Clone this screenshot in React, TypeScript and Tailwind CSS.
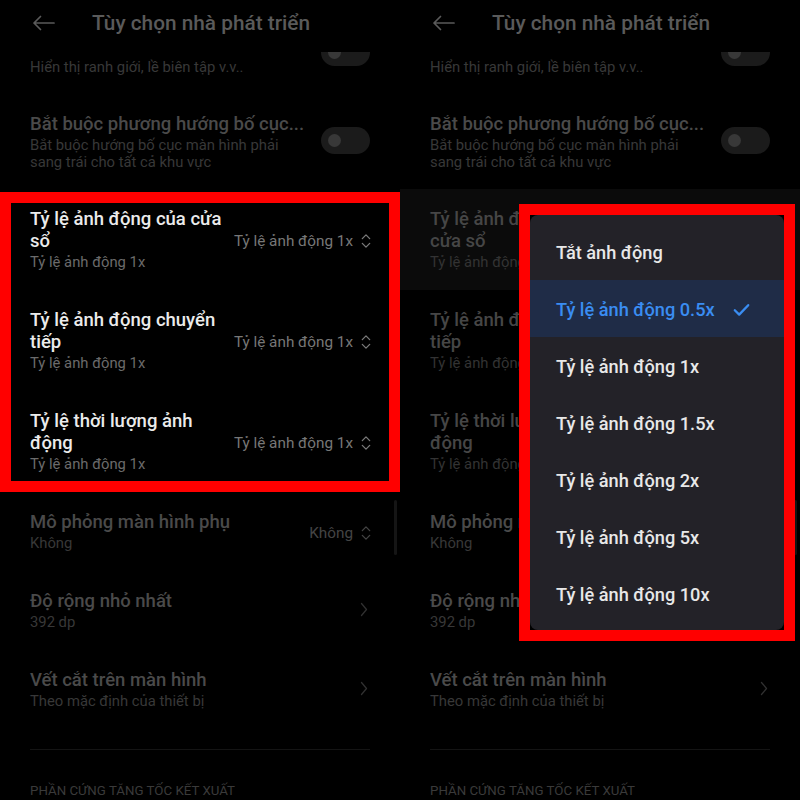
import React from "react";

function BackArrow() {
  return (
    <svg width="24" height="16" viewBox="0 0 24 16" fill="none">
      <path d="M2 8 H22 M8.5 1.5 L2 8 L8.5 14.5" stroke="#5a5a5a" strokeWidth="1.7" strokeLinecap="round" strokeLinejoin="round" />
    </svg>
  );
}

function UpDown({ color }: { color: string }) {
  return (
    <svg width="10" height="16" viewBox="0 0 10 16" fill="none">
      <path d="M1.3 5.6 L5 1.9 L8.7 5.6 M1.3 10.4 L5 14.1 L8.7 10.4" stroke={color} strokeWidth="1.3" strokeLinecap="round" strokeLinejoin="round" />
    </svg>
  );
}

function ChevronRight() {
  return (
    <svg width="8" height="15" viewBox="0 0 8 15" fill="none">
      <path d="M1.5 1.5 L6.5 7.5 L1.5 13.5" stroke="#303030" strokeWidth="1.3" strokeLinecap="round" strokeLinejoin="round" />
    </svg>
  );
}

function Check() {
  return (
    <svg width="17" height="14" viewBox="0 0 17 14" fill="none">
      <path d="M1.8 7.3 L6.2 11.6 L15.2 2.2" stroke="#3a8df2" strokeWidth="2.3" strokeLinecap="round" strokeLinejoin="round" />
    </svg>
  );
}

function Toggle({ className }: { className: string }) {
  return (
    <div className={`w-[49px] h-[27px] rounded-full bg-[#1b1b1b] flex items-center pl-[7px] shrink-0 ${className}`}>
      <div className="w-[13px] h-[13px] rounded-full bg-[#383838]" />
    </div>
  );
}

function Header() {
  return (
    <div className="h-[52px] shrink-0 bg-black flex items-start pt-[11px] pl-[32px]">
      <div className="mt-[4px]">
        <BackArrow />
      </div>
      <div className="ml-[36px] text-[20.8px] leading-[24px] font-medium text-[#5a5a5a] whitespace-nowrap">
        Tùy chọn nhà phát triển
      </div>
    </div>
  );
}

type RowProps = {
  lines: string[];
  sub: string[];
  titleCls: string;
  subCls: string;
  subLh: string;
  right?: React.ReactNode;
  bg?: string;
};

function Row({ lines, sub, titleCls, subCls, subLh, right, bg = "" }: RowProps) {
  return (
    <div className={`flex items-center justify-between pl-[30px] pr-[29px] pt-[19px] pb-[17px] ${bg}`}>
      <div className="flex flex-col">
        <div className={`text-[18.5px] leading-[22px] font-medium whitespace-nowrap ${titleCls}`}>
          {lines.map((l, i) => (
            <div key={i}>{l}</div>
          ))}
        </div>
        <div className={`text-[14.8px] whitespace-nowrap ${subLh} ${subCls}`}>
          {sub.map((l, i) => (
            <div key={i}>{l}</div>
          ))}
        </div>
      </div>
      {right}
    </div>
  );
}

function Value({ text, cls, icon }: { text: string; cls: string; icon: string }) {
  return (
    <div className="flex items-center gap-[8px] shrink-0">
      <span className={`text-[15.3px] leading-[20px] ${cls}`}>{text}</span>
      <UpDown color={icon} />
    </div>
  );
}

const OPTIONS = [
  "Tắt ảnh động",
  "Tỷ lệ ảnh động 0.5x",
  "Tỷ lệ ảnh động 1x",
  "Tỷ lệ ảnh động 1.5x",
  "Tỷ lệ ảnh động 2x",
  "Tỷ lệ ảnh động 5x",
  "Tỷ lệ ảnh động 10x",
];

function Dropdown() {
  return (
    <div className="absolute left-[119px] top-[204px] w-[276px] border-[11px] border-[#ff0000] bg-black">
      <div className="bg-[#232228] rounded-[8px] py-[8px]">
        {OPTIONS.map((o, i) => (
          <div
            key={o}
            className={
              i === 1
                ? "h-[57px] flex items-center justify-between pl-[26px] pr-[34px] pt-[3px] bg-[#1f2c47]"
                : "h-[57px] flex items-center justify-between pl-[26px] pr-[34px] pt-[3px]"
            }
          >
            <span
              className={
                i === 1
                  ? "text-[18.2px] font-medium text-[#3a8df2] whitespace-nowrap"
                  : "text-[18.2px] font-medium text-[#e8e8e8] whitespace-nowrap"
              }
            >
              {o}
            </span>
            {i === 1 && <Check />}
          </div>
        ))}
      </div>
    </div>
  );
}

function Panel({ right }: { right: boolean }) {
  const hiTitle = right ? "text-[#464646]" : "text-[#ebebeb]";
  const hiSub = right ? "text-[#333333]" : "text-[#6b6b6b]";
  const hiVal = right ? "text-[#3c3c3c]" : "text-[#777777]";
  const hiIcon = right ? "#3c3c3c" : "#7a7a7a";
  const dimTitle = "text-[#4a4a4a]";
  const dimSub = "text-[#383838]";

  return (
    <div className="relative w-[400px] h-[800px] bg-black flex flex-col overflow-hidden">
      <Header />
      <div className="flex-1 overflow-hidden">
        <div className="-mt-[34px] flex flex-col">
          <div className="flex items-center justify-between pl-[30px] pr-[30px] pt-[13px] pb-[19px]">
            <div className="flex flex-col">
              <div className={`text-[18.5px] leading-[22px] font-medium whitespace-nowrap ${dimTitle}`}>
                Hiển thị giới hạn bố cục
              </div>
              <div className={`text-[14.8px] leading-[18px] mt-[5px] whitespace-nowrap ${dimSub}`}>
                Hiển thị ranh giới, lề biên tập v.v..
              </div>
            </div>
            <Toggle className="mb-[2px]" />
          </div>

          <div className="flex items-center justify-between pl-[30px] pr-[30px] py-[18px]">
            <div className="flex flex-col">
              <div className={`text-[18.5px] leading-[22px] font-medium whitespace-nowrap ${dimTitle}`}>
                Bắt buộc phương hướng bố cục...
              </div>
              <div className={`text-[14.8px] leading-[17px] mt-[2px] whitespace-nowrap ${dimSub}`}>
                <div>Bắt buộc hướng bố cục màn hình phải</div>
                <div>sang trái cho tất cả khu vực</div>
              </div>
            </div>
            <Toggle className="mb-[3px]" />
          </div>

          <div className="relative">
            <Row
              lines={right ? ["Tỷ lệ ảnh động của", "cửa sổ"] : ["Tỷ lệ ảnh động của cửa", "sổ"]}
              sub={["Tỷ lệ ảnh động 1x"]}
              titleCls={hiTitle}
              subCls={hiSub}
              subLh="leading-[21px]"
              bg={right ? "bg-[#0b0b0b]" : ""}
              right={<Value text={right ? "Tỷ lệ ảnh động 0.5x" : "Tỷ lệ ảnh động 1x"} cls={hiVal} icon={hiIcon} />}
            />
            <Row
              lines={["Tỷ lệ ảnh động chuyển", "tiếp"]}
              sub={["Tỷ lệ ảnh động 1x"]}
              titleCls={hiTitle}
              subCls={hiSub}
              subLh="leading-[21px]"
              right={<Value text="Tỷ lệ ảnh động 1x" cls={hiVal} icon={hiIcon} />}
            />
            <Row
              lines={["Tỷ lệ thời lượng ảnh", "động"]}
              sub={["Tỷ lệ ảnh động 1x"]}
              titleCls={hiTitle}
              subCls={hiSub}
              subLh="leading-[21px]"
              right={<Value text="Tỷ lệ ảnh động 1x" cls={hiVal} icon={hiIcon} />}
            />
            {!right && (
              <div className="absolute left-0 right-0 top-[3px] bottom-0 border-[11px] border-[#ff0000] pointer-events-none" />
            )}
          </div>

          <Row
            lines={["Mô phỏng màn hình phụ"]}
            sub={["Không"]}
            titleCls={dimTitle}
            subCls={dimSub}
            subLh="leading-[21px]"
            right={<Value text="Không" cls="text-[#444444]" icon="#444444" />}
          />
          <Row
            lines={["Độ rộng nhỏ nhất"]}
            sub={["392 dp"]}
            titleCls={dimTitle}
            subCls={dimSub}
            subLh="leading-[21px]"
            right={
              <div className="mb-[4px] mr-[3px]">
                <ChevronRight />
              </div>
            }
          />
          <Row
            lines={["Vết cắt trên màn hình"]}
            sub={["Theo mặc định của thiết bị"]}
            titleCls={dimTitle}
            subCls={dimSub}
            subLh="leading-[21px]"
            right={
              <div className="mb-[4px] mr-[3px]">
                <ChevronRight />
              </div>
            }
          />
          <div className="mx-[30px] mt-[20px] h-px bg-[#141414]" />
          <div className="pl-[30px] mt-[33px] text-[13.3px] leading-[16px] text-[#3a3a3a] whitespace-nowrap">
            PHẦN CỨNG TĂNG TỐC KẾT XUẤT
          </div>
        </div>
      </div>
      <div className="absolute right-[3px] top-[500px] w-[3px] h-[55px] rounded-full bg-[#151515]" />
      {right && <Dropdown />}
    </div>
  );
}

export default function App() {
  return (
    <div className="w-[800px] h-[800px] flex bg-black font-['Roboto',sans-serif]">
      <Panel right={false} />
      <Panel right={true} />
    </div>
  );
}
